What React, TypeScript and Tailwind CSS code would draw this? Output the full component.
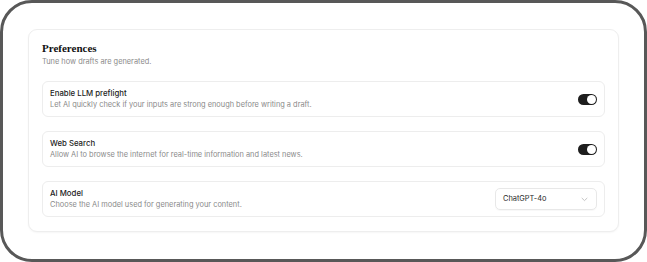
import React from 'react';

const Toggle: React.FC<{ on?: boolean }> = ({ on = true }) => (
  <div className={`w-[19px] h-[11px] rounded-full flex items-center px-[1px] ${on ? 'bg-[#1d1d1d] justify-end' : 'bg-gray-300 justify-start'}`}>
    <div className="w-[9px] h-[9px] rounded-full bg-white" />
  </div>
);

const SettingRow: React.FC<{ title: string; desc: string; children: React.ReactNode }> = ({ title, desc, children }) => (
  <div className="flex items-center justify-between border border-[#ededed] rounded-[6px] bg-white pl-[7px] pr-[7px] py-[5px]">
    <div className="flex flex-col">
      <span className="text-[7.8px] leading-[12px] font-medium text-[#1c1c1c]">{title}</span>
      <span className="text-[7.4px] leading-[12px] text-[#8a8a8a]">{desc}</span>
    </div>
    {children}
  </div>
);

export default function App() {
  return (
    <div className="w-[647px] h-[262px] bg-white" style={{ fontFamily: 'Inter, "Noto Sans", sans-serif' }}>
      <div className="h-full border-[3px] border-[#585858] rounded-[32px] px-[25px] pt-[26px]">
        <div className="rounded-[9px] border border-[#eeeeee] bg-white shadow-[0_1px_2px_rgba(0,0,0,0.04)] px-[13px] pt-[10px] pb-[14px]">
          <h2 className="text-[11px] leading-[16px] font-bold text-[#111]" style={{ fontFamily: '"Liberation Serif", serif' }}>Preferences</h2>
          <p className="text-[7.4px] leading-[12px] text-[#8a8a8a]">Tune how drafts are generated.</p>
          <div className="mt-[13px] flex flex-col gap-[14px]">
            <SettingRow title="Enable LLM preflight" desc="Let AI quickly check if your inputs are strong enough before writing a draft.">
              <Toggle />
            </SettingRow>
            <SettingRow title="Web Search" desc="Allow AI to browse the internet for real-time information and latest news.">
              <Toggle />
            </SettingRow>
            <SettingRow title="AI Model" desc="Choose the AI model used for generating your content.">
              <div className="w-[102px] h-[22px] border border-[#e8e8e8] rounded-[5px] flex items-center justify-between pl-[7px] pr-[8px] shadow-[0_1px_1px_rgba(0,0,0,0.03)]">
                <span className="text-[7.4px] text-[#2a2a2a]">ChatGPT-4o</span>
                <svg width="7" height="5" viewBox="0 0 7 5" fill="none">
                  <path d="M1 1.2 L3.5 3.6 L6 1.2" stroke="#b5b5b5" strokeWidth="0.8" strokeLinecap="round" strokeLinejoin="round" />
                </svg>
              </div>
            </SettingRow>
          </div>
        </div>
      </div>
    </div>
  );
}
